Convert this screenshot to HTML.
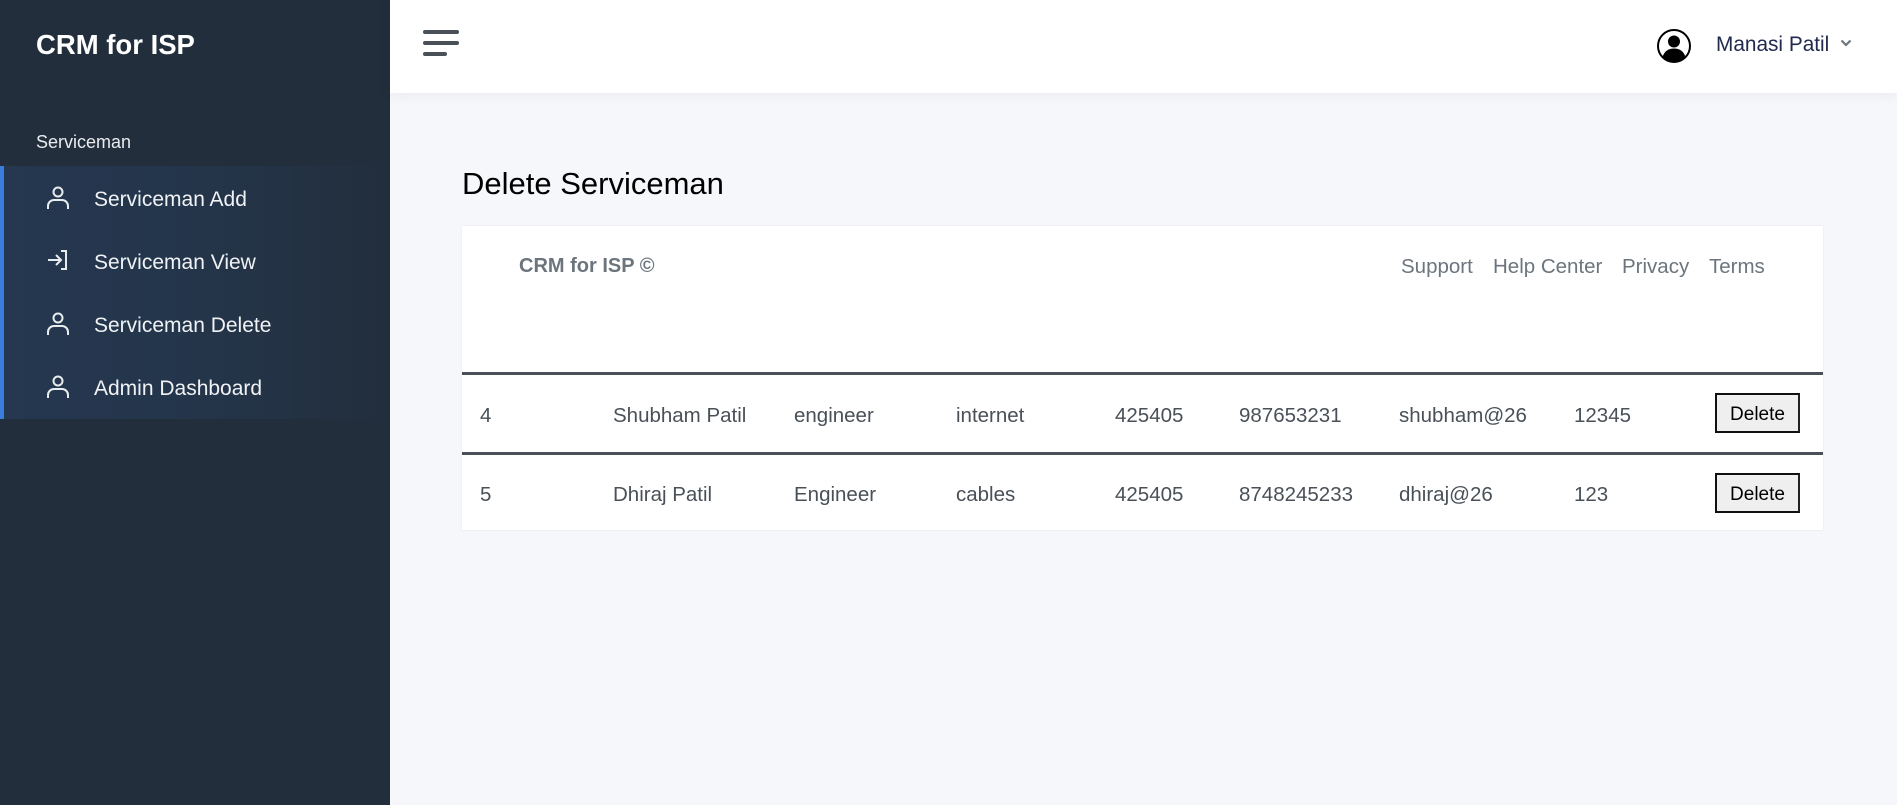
<!DOCTYPE html>
<html><head><meta charset="utf-8"><style>
*{margin:0;padding:0;box-sizing:border-box}
body{width:1897px;height:805px;overflow:hidden;background:#f5f7fb;font-family:"Liberation Sans",Arial,sans-serif;position:relative}
.sb{position:absolute;left:0;top:0;width:390px;height:805px;background:#222e3c}
.logo{position:absolute;left:36px;top:29px;color:#fff;font-weight:bold;font-size:27.5px}
.lab{position:absolute;left:36px;top:132px;color:#e9ecef;font-size:18px}
.nav{position:absolute;left:0;top:166px;width:390px;height:253px;border-left:4px solid #3b7ddd;background:linear-gradient(90deg,rgba(59,125,221,.12),rgba(59,125,221,.09) 50%,rgba(59,125,221,0))}
.it{position:absolute;left:0;height:63px;width:386px;color:#f0f2f5;font-size:21px;line-height:63px}
.it span{position:absolute;left:90px;top:2px}
.it svg{position:absolute;left:42px;top:18px}
.hd{position:absolute;left:390px;top:0;width:1507px;height:93px;background:#fff;box-shadow:0 0 14px rgba(33,37,41,.08)}
.t{position:absolute;white-space:nowrap}
.card{position:absolute;left:462px;top:226px;width:1361px;height:304px;background:#fff;box-shadow:0 0 2px rgba(0,0,0,.08)}
.ln{position:absolute;left:462px;width:1361px;height:3px;background:#495057}
.r{position:absolute;font-size:20.5px;color:#495057;white-space:nowrap}
.btn{position:absolute;left:1715px;width:85px;height:40px;border:2px solid #111;border-right-color:#222;background:#efefef;font-size:19px;color:#000;text-align:center;line-height:39px}
</style></head><body>
<div class="sb">
<div class="logo">CRM for ISP</div>
<div class="lab">Serviceman</div>
<div class="nav">
<div class="it" style="top:0"><svg width="24" height="26" viewBox="0 0 24 26" fill="none" stroke="#e9ecef" stroke-width="2"><circle cx="12" cy="8" r="4.5"/><path d="M2 25v-3a6 6 0 0 1 6-6h8a6 6 0 0 1 6 6v3"/></svg><span>Serviceman Add</span></div>
<div class="it" style="top:63px"><svg width="24" height="26" viewBox="0 0 24 26" fill="none" stroke="#e9ecef" stroke-width="2"><path d="M15 4h5v18h-5M2 13h13M10 8l5 5-5 5"/></svg><span>Serviceman View</span></div>
<div class="it" style="top:126px"><svg width="24" height="26" viewBox="0 0 24 26" fill="none" stroke="#e9ecef" stroke-width="2"><circle cx="12" cy="8" r="4.5"/><path d="M2 25v-3a6 6 0 0 1 6-6h8a6 6 0 0 1 6 6v3"/></svg><span>Serviceman Delete</span></div>
<div class="it" style="top:189px"><svg width="24" height="26" viewBox="0 0 24 26" fill="none" stroke="#e9ecef" stroke-width="2"><circle cx="12" cy="8" r="4.5"/><path d="M2 25v-3a6 6 0 0 1 6-6h8a6 6 0 0 1 6 6v3"/></svg><span>Admin Dashboard</span></div>
</div>
</div>
<div class="hd">
<div style="position:absolute;left:33px;top:30px;width:36px;height:4px;background:#495057;border-radius:2px"></div>
<div style="position:absolute;left:33px;top:41px;width:36px;height:4px;background:#495057;border-radius:2px"></div>
<div style="position:absolute;left:33px;top:52px;width:24px;height:4px;background:#495057;border-radius:2px"></div>
<svg style="position:absolute;left:1267px;top:29px" width="34" height="34" viewBox="0 0 34 34"><circle cx="17" cy="17" r="16" fill="#fff" stroke="#000" stroke-width="2"/><circle cx="17" cy="12.5" r="6" fill="#000"/><path d="M5.5 28c2-6 6-8.5 11.5-8.5s9.5 2.5 11.5 8.5a16 16 0 0 1-23 0z" fill="#000"/></svg>
<div class="t" style="left:1326px;top:33px;font-size:20.8px;color:#212a4e">Manasi Patil</div>
<svg style="position:absolute;left:1450px;top:38px" width="12" height="10" viewBox="0 0 12 10"><path d="M1.5 2.5l4.5 4.5 4.5-4.5" fill="none" stroke="#6c757d" stroke-width="2.2"/></svg>
</div>
<div class="t" style="left:462px;top:166px;font-size:31px;color:#000">Delete Serviceman</div>
<div class="card"></div>
<div class="t" style="left:519px;top:255px;font-size:20px;font-weight:bold;color:#6c757d">CRM for ISP ©</div>
<div class="t" style="left:1401px;top:255px;font-size:20.5px;color:#6c757d">Support</div>
<div class="t" style="left:1493px;top:255px;font-size:20.5px;color:#6c757d">Help Center</div>
<div class="t" style="left:1622px;top:255px;font-size:20.5px;color:#6c757d">Privacy</div>
<div class="t" style="left:1709px;top:255px;font-size:20.5px;color:#6c757d">Terms</div>
<div class="ln" style="top:372px"></div>
<div class="ln" style="top:452px"></div>
<div class="r" style="left:480px;top:404px">4</div>
<div class="r" style="left:613px;top:404px">Shubham Patil</div>
<div class="r" style="left:794px;top:404px">engineer</div>
<div class="r" style="left:956px;top:404px">internet</div>
<div class="r" style="left:1115px;top:404px">425405</div>
<div class="r" style="left:1239px;top:404px">987653231</div>
<div class="r" style="left:1399px;top:404px">shubham@26</div>
<div class="r" style="left:1574px;top:404px">12345</div>
<div class="btn" style="top:393px">Delete</div>
<div class="r" style="left:480px;top:483px">5</div>
<div class="r" style="left:613px;top:483px">Dhiraj Patil</div>
<div class="r" style="left:794px;top:483px">Engineer</div>
<div class="r" style="left:956px;top:483px">cables</div>
<div class="r" style="left:1115px;top:483px">425405</div>
<div class="r" style="left:1239px;top:483px">8748245233</div>
<div class="r" style="left:1399px;top:483px">dhiraj@26</div>
<div class="r" style="left:1574px;top:483px">123</div>
<div class="btn" style="top:473px">Delete</div>
</body></html>
